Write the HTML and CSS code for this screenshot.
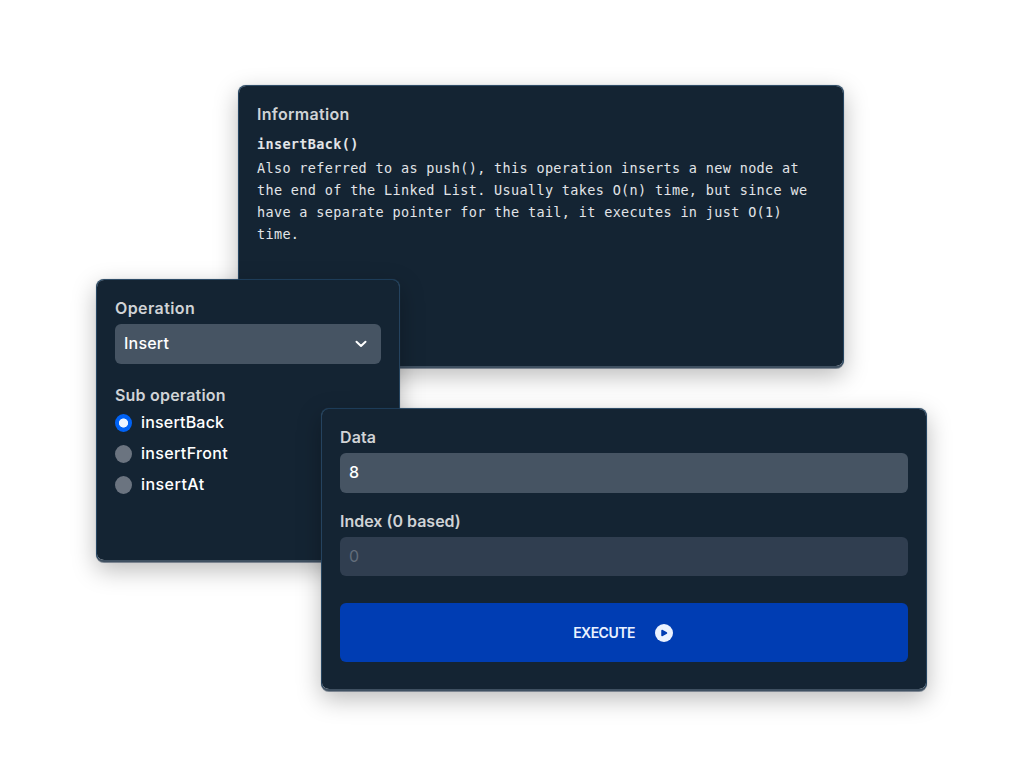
FILE: index.html
```html
<!DOCTYPE html>
<html lang="en">
<head>
<meta charset="utf-8">
<title>Linked List</title>
<link rel="stylesheet" href="styles.css">
</head>
<body>
<main class="stage">
  <section class="card card-info">
    <h2 class="label label-info">Information</h2>
    <div class="docs">
      <strong class="docs-title">insertBack()</strong>
      <p class="docs-text">Also referred to as push(), this operation inserts a new node at<br>the end of the Linked List. Usually takes O(n) time, but since we<br>have a separate pointer for the tail, it executes in just O(1)<br>time.</p>
    </div>
  </section>
  <section class="card card-operation">
    <h2 class="label"><span class="t-operation">Operation</span></h2>
    <div class="field select"><span class="t-insert">Insert</span>
      <svg class="chevron" viewBox="0 0 12 8"><path d="M1.500 1.800 6 6l4.500-4.200"/></svg>
    </div>
    <h2 class="label label-sub"><span class="t-sub">Sub operation</span></h2>
    <div class="options">
      <div class="option"><i class="radio checked"></i><span class="t-back">insertBack</span></div>
      <div class="option"><i class="radio"></i><span class="t-front">insertFront</span></div>
      <div class="option"><i class="radio"></i><span class="t-at">insertAt</span></div>
    </div>
  </section>
  <section class="card card-data">
    <h2 class="label"><span class="t-data">Data</span></h2>
    <div class="field">8</div>
    <h2 class="label label-index"><span class="t-index">Index (0 based)</span></h2>
    <div class="field disabled">0</div>
    <div class="execute"><span class="t-execute">EXECUTE</span>
      <svg class="play" viewBox="0 0 18 18"><circle cx="9" cy="9" r="9"/><path d="M7 6.500v5L11.500 9z"/></svg>
    </div>
  </section>
</main>
</body>
</html>
```

FILE: styles.css
```css
* { box-sizing: border-box; }
body { margin: 0; background: #fff; font-family: Inter, "Liberation Sans", sans-serif; color: #fff; }
.stage { position: relative; width: 1023px; height: 776px; overflow: hidden; }
.card {
  position: absolute;
  height: 283px;
  padding: 18px;
  background: #142433;
  background-clip: padding-box;
  border: 1px solid rgba(28, 62, 92, .82);
  border-bottom: 2px solid #3f5061;
  border-radius: 8px;
  box-shadow: 0 0 1px rgba(60, 80, 95, .6), 0 1px 0 rgba(120, 130, 142, .9), 0 8px 24px rgba(0, 0, 0, .27);
}
.card-info { left: 238px; top: 85px; width: 606px; }
.card-operation { left: 96px; top: 279px; width: 304px; }
.card-data { left: 321px; top: 408px; width: 606px; }
.label { margin: 0; height: 26px; font-size: 16px; line-height: 21px; font-weight: 600; color: #d0d3d6; white-space: nowrap; }
.label-info { height: 29px; letter-spacing: .3px; }
.label-sub { margin-top: 21px; height: 27px; }
.label-index { margin-top: 18px; }
.docs { font-family: "DejaVu Sans Mono", "Liberation Mono", monospace; font-size: 13.500px; letter-spacing: .34px; color: #e2e5e8; white-space: nowrap; }
.docs-title { display: block; height: 24px; line-height: 22px; }
.docs-text { margin: 0; line-height: 22px; }
.field { display: flex; align-items: center; justify-content: space-between; height: 40px; padding: 0 14px 2px 9px; border-radius: 6px; background: #465463; font-size: 16px; font-weight: 500; }
.field.disabled { height: 39px; padding-bottom: 1px; background: #303e50; color: #626d7b; font-weight: 400; }
.chevron { width: 12px; height: 8px; margin-top: 2px; fill: none; stroke: #fff; stroke-width: 2; stroke-linecap: round; stroke-linejoin: round; }
.options { margin-top: -5px; }
.option { display: flex; align-items: center; gap: 9px; height: 31px; font-size: 16px; font-weight: 500; }
.option span { position: relative; top: -1px; }
.radio { width: 17px; height: 18px; border-radius: 50%; background: #6b7480; }
.radio.checked { background: radial-gradient(circle, #edf4ff 4.200px, #0062f5 4.900px); }
.t-operation { letter-spacing: .4px; }
.t-insert { letter-spacing: .2px; }
.t-sub { letter-spacing: .2px; }
.t-back { letter-spacing: .18px; }
.t-front { letter-spacing: .34px; }
.t-at { letter-spacing: .45px; }
.t-data { letter-spacing: .1px; }
.t-index { letter-spacing: 0; }
.execute { display: flex; align-items: center; justify-content: center; gap: 20px; height: 59px; margin-top: 27px; padding-right: 2px; border-radius: 6px; background: #003db3; font-size: 14px; font-weight: 600; color: #ebf2ff; }
.t-execute { letter-spacing: -.52px; }
.play { width: 18px; height: 18px; fill: #ebf2ff; }
.play path { fill: #003db3; stroke: #003db3; stroke-width: 1.500; stroke-linejoin: round; }
```
